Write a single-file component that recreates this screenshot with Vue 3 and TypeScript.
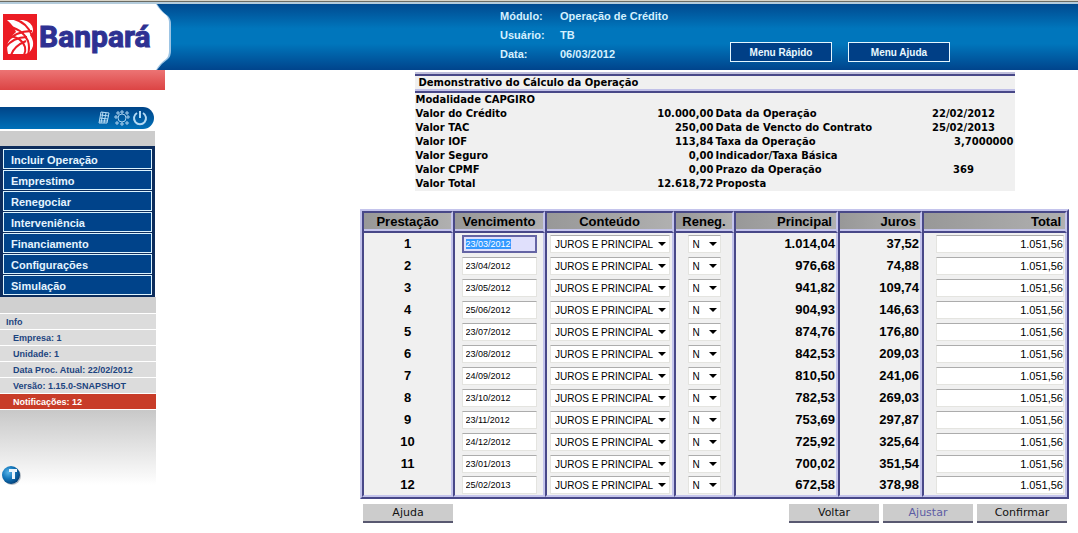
<script setup lang="ts">
import { onMounted, reactive, ref } from 'vue'

interface Installment {
  number: number
  due: string
  content: string
  renegotiated: string
  principal: string
  interest: string
  total: string
}

interface SummaryRow {
  label: string
  value: string
  otherLabel: string
  otherValue: string
  numeric?: boolean
}

const session = [
  { label: 'Módulo:', value: 'Operação de Crédito' },
  { label: 'Usuário:', value: 'TB' },
  { label: 'Data:', value: '06/03/2012' },
]

const menu = [
  'Incluir Operação',
  'Emprestimo',
  'Renegociar',
  'Interveniência',
  'Financiamento',
  'Configurações',
  'Simulação',
]

const info = ['Empresa: 1', 'Unidade: 1', 'Data Proc. Atual: 22/02/2012', 'Versão: 1.15.0-SNAPSHOT']

const summary: SummaryRow[] = [
  { label: 'Valor do Crédito', value: '10.000,00', otherLabel: 'Data da Operação', otherValue: '22/02/2012' },
  { label: 'Valor TAC', value: '250,00', otherLabel: 'Data de Vencto do Contrato', otherValue: '25/02/2013' },
  { label: 'Valor IOF', value: '113,84', otherLabel: 'Taxa da Operação', otherValue: '3,7000000', numeric: true },
  { label: 'Valor Seguro', value: '0,00', otherLabel: 'Indicador/Taxa Básica', otherValue: '' },
  { label: 'Valor CPMF', value: '0,00', otherLabel: 'Prazo da Operação', otherValue: '369' },
  { label: 'Valor Total', value: '12.618,72', otherLabel: 'Proposta', otherValue: '' },
]

const source: [string, string, string][] = [
  ['23/03/2012', '1.014,04', '37,52'],
  ['23/04/2012', '976,68', '74,88'],
  ['23/05/2012', '941,82', '109,74'],
  ['25/06/2012', '904,93', '146,63'],
  ['23/07/2012', '874,76', '176,80'],
  ['23/08/2012', '842,53', '209,03'],
  ['24/09/2012', '810,50', '241,06'],
  ['23/10/2012', '782,53', '269,03'],
  ['23/11/2012', '753,69', '297,87'],
  ['24/12/2012', '725,92', '325,64'],
  ['23/01/2013', '700,02', '351,54'],
  ['25/02/2013', '672,58', '378,98'],
]

const installments = reactive<Installment[]>(
  source.map(([due, principal, interest], i) => ({
    number: i + 1,
    due,
    content: 'JUROS E PRINCIPAL',
    renegotiated: 'N',
    principal,
    interest,
    total: '1.051,56',
  })),
)

const form = ref<HTMLFormElement | null>(null)

onMounted(() => {
  const first = form.value?.querySelector<HTMLInputElement>('.date')
  first?.focus()
  first?.select()
})
</script>

<template>
  <div class="page">
    <header class="top">
      <svg class="logo" viewBox="0 0 172 66" role="img" aria-label="Banpará">
        <path d="M0 0H157Q162 8 168 12Q171 15 171 20V47Q171 52 168 55Q162 59 157 66H0Z" fill="#9cc4e4" />
        <path d="M0 0H156Q160 7 166 11Q169 14 169 19V47Q169 52 166 55Q160 59 156 66H0Z" fill="#fff" />
        <rect x="3" y="10" width="34" height="46" fill="#ec1c24" />
        <path d="M7 16H23Q32 18 33 25Q33 29 30 31Q34 37 33 42Q31 49 25 50H8Q6 42 9 36Q12 31 16 28Q14 22 7 16Z" fill="#fff" />
        <g fill="none" stroke="#ec1c24" stroke-width="2">
          <path d="M14 15Q28 19 32 32" />
          <path d="M6 22Q22 24 28 37Q30 43 28 51" />
          <path d="M6 39Q15 27 32 27" />
          <path d="M5 44Q13 33 27 33" />
          <path d="M11 51Q14 42 26 37" />
          <path d="M7 32Q21 32 25 43Q26 47 24 51" />
        </g>
        <text x="39" y="43" class="wordmark">Banpará</text>
      </svg>
      <dl class="session">
        <template v-for="item in session" :key="item.label">
          <dt>{{ item.label }}</dt>
          <dd>{{ item.value }}</dd>
        </template>
      </dl>
      <nav class="shortcuts">
        <button type="button">Menu Rápido</button>
        <button type="button">Menu Ajuda</button>
      </nav>
    </header>

    <div class="body">
      <aside class="side">
        <div class="red-bar"></div>
        <div class="tools">
          <button type="button" aria-label="Calculadora">
            <svg viewBox="0 0 16 16" fill="none" stroke="#b8dcf4" stroke-width="1">
              <path d="M5 2L13 3L11 13L3 13Z M7 2L5 13 M10 3L8 13 M5 5L13 6 M4 8L12 9 M3 11L11 11" />
            </svg>
          </button>
          <button type="button" aria-label="Configurar">
            <svg viewBox="0 0 16 16" fill="none" stroke="#a8d0ee" stroke-width="1">
              <circle cx="8" cy="8" r="4" />
              <path d="M7 1H9V3H7Z M7 13H9V15H7Z M1 6H3V8H1Z M13 6H15V8H13Z M3 2H5V4H3Z M12 2H14V4H12Z M2 12H4V14H2Z M12 12H14V14H12Z" />
            </svg>
          </button>
          <button type="button" aria-label="Sair">
            <svg viewBox="0 0 16 16" fill="none" stroke="#b4daf4" stroke-width="2">
              <path d="M5 3A6 6 0 1 0 11 3M8 1V8" />
            </svg>
          </button>
        </div>
        <nav class="menu">
          <a v-for="entry in menu" :key="entry" href="#">{{ entry }}</a>
        </nav>
        <div class="info">
          <div class="info-title">Info</div>
          <div v-for="line in info" :key="line" class="info-line">{{ line }}</div>
          <div class="info-line alert">Notificações: 12</div>
        </div>
        <div class="fade">
          <svg viewBox="0 0 20 20" class="ball" aria-hidden="true">
            <defs>
              <radialGradient id="ball-fill" cx="35%" cy="35%" r="70%">
                <stop offset="0" stop-color="#58b4e8" />
                <stop offset="0.5" stop-color="#1478bc" />
                <stop offset="1" stop-color="#023f78" />
              </radialGradient>
            </defs>
            <circle cx="11" cy="11" r="9" fill="#b4bcc4" />
            <circle cx="10" cy="10" r="9" fill="url(#ball-fill)" />
            <path d="M8 4H16V7H14V14H11V7H8Z" fill="#eaf5fc" />
          </svg>
        </div>
      </aside>

      <main class="content">
        <section class="summary">
          <h1>Demonstrativo do Cálculo da Operação</h1>
          <table>
            <colgroup>
              <col class="s-label" />
              <col class="s-value" />
              <col class="s-other" />
              <col />
            </colgroup>
            <tbody>
              <tr>
                <th colspan="4" scope="row">Modalidade CAPGIRO</th>
              </tr>
              <tr v-for="row in summary" :key="row.label">
                <th scope="row">{{ row.label }}</th>
                <td class="num">{{ row.value }}</td>
                <th scope="row">{{ row.otherLabel }}</th>
                <td :class="row.numeric ? 'num' : 'mid'">{{ row.otherValue }}</td>
              </tr>
            </tbody>
          </table>
        </section>

        <form ref="form" @submit.prevent>
          <table class="grid">
            <colgroup>
              <col class="c-number" />
              <col class="c-due" />
              <col class="c-content" />
              <col class="c-reneg" />
              <col class="c-principal" />
              <col class="c-interest" />
              <col />
            </colgroup>
            <thead>
              <tr>
                <th scope="col">Prestação</th>
                <th scope="col">Vencimento</th>
                <th scope="col">Conteúdo</th>
                <th scope="col">Reneg.</th>
                <th scope="col" class="right">Principal</th>
                <th scope="col" class="right">Juros</th>
                <th scope="col" class="right">Total</th>
              </tr>
            </thead>
            <tbody>
              <tr v-for="row in installments" :key="row.number">
                <td>{{ row.number }}</td>
                <td>
                  <input v-model="row.due" class="date" type="text" :aria-label="`Vencimento ${row.number}`" />
                </td>
                <td>
                  <span class="pick wide">
                    <select v-model="row.content" :aria-label="`Conteúdo ${row.number}`">
                      <option>JUROS E PRINCIPAL</option>
                    </select>
                  </span>
                </td>
                <td>
                  <span class="pick">
                    <select v-model="row.renegotiated" :aria-label="`Reneg. ${row.number}`">
                      <option>N</option>
                      <option>S</option>
                    </select>
                  </span>
                </td>
                <td class="right">{{ row.principal }}</td>
                <td class="right">{{ row.interest }}</td>
                <td class="right">
                  <input v-model="row.total" class="total" type="text" :aria-label="`Total ${row.number}`" />
                </td>
              </tr>
            </tbody>
          </table>
          <div class="actions">
            <button type="button" class="help">Ajuda</button>
            <button type="button">Voltar</button>
            <button type="button" class="muted">Ajustar</button>
            <button type="submit">Confirmar</button>
          </div>
        </form>
      </main>
    </div>
  </div>
</template>

<style>
body {
  margin: 0;
  background: #fff;
}
</style>

<style scoped>
.page {
  font-family: "Liberation Sans", Arial, sans-serif;
  color: #000;
}
.page * {
  box-sizing: border-box;
}
button {
  font-family: inherit;
  cursor: pointer;
}

.top {
  display: flex;
  border-top: 1px solid #d8d4c8;
  box-shadow: inset 0 1px #6c6c64, inset 0 3px #b4ccdc;
  padding-top: 3px;
  background: linear-gradient(#00448a, #0076bc 40%, #0076bc 62%, #00448c);
}
.logo {
  width: 172px;
  height: 66px;
  flex: none;
}
.wordmark {
  font: bold 30px Roboto, "Liberation Sans", sans-serif;
  fill: #2e3192;
  stroke: #2e3192;
  stroke-width: 1px;
}
.session {
  display: grid;
  grid-template-columns: 60px auto;
  align-content: start;
  margin: 3px 0 0 auto;
  width: 230px;
  font-size: 11px;
  font-weight: bold;
  line-height: 19px;
  color: #d4f0ff;
}
.session dd {
  margin: 0;
}
.shortcuts {
  display: flex;
  align-items: flex-start;
  gap: 16px;
  padding-top: 38px;
  margin-right: 128px;
}
.shortcuts button {
  width: 102px;
  height: 20px;
  padding: 0;
  border: 1px solid #e4f6ff;
  background: #003f86;
  color: #e8f8ff;
  font-size: 10px;
  font-weight: bold;
}

.body {
  display: flex;
  align-items: flex-start;
}
.side {
  width: 165px;
  flex: none;
}
.red-bar {
  height: 20px;
  background: linear-gradient(#ec7474, #dc4444);
}
.tools {
  display: flex;
  justify-content: flex-end;
  align-items: center;
  gap: 2px;
  width: 154px;
  height: 22px;
  margin-top: 17px;
  padding-right: 6px;
  border-radius: 0 11px 11px 0;
  background: linear-gradient(#004488, #0070b8);
}
.tools button {
  display: block;
  width: 16px;
  height: 16px;
  padding: 0;
  border: 0;
  background: none;
}
.tools svg {
  display: block;
}
.menu {
  display: flex;
  flex-direction: column;
  gap: 1px;
  width: 155px;
  margin-top: 2px;
  padding: 3px 3px 2px;
  border-top: 15px solid #ccc;
  background: #0c2c5c;
}
.menu a {
  height: 20px;
  padding-left: 7px;
  border: 1px solid #dcf4ff;
  background: #00438a;
  color: #e4f4ff;
  font-size: 11px;
  font-weight: bold;
  line-height: 20px;
  text-decoration: none;
}
.info {
  width: 156px;
  padding-top: 16px;
  background: #d0d0d0;
  color: #1c4480;
  font-size: 9px;
  font-weight: bold;
}
.info-title,
.info-line {
  height: 16px;
  padding-left: 13px;
  border-top: 1px solid #fff;
  background: #dcdcdc;
  line-height: 16px;
}
.info-title {
  padding-left: 6px;
}
.info-line.alert {
  background: #c83c28;
  color: #fff;
}
.fade {
  width: 156px;
  padding: 55px 0 0 1px;
  border-top: 1px solid #fff;
  background: linear-gradient(#c8c8c8, #fff);
}
.ball {
  display: block;
  width: 20px;
  height: 20px;
}

.content {
  flex: 1;
  min-width: 0;
  padding: 2px 9px 0 195px;
}
.summary {
  max-width: 600px;
  margin: 0 auto;
  background: #f0f0f0;
  font-family: "DejaVu Sans", Verdana, sans-serif;
  font-size: 10px;
  font-weight: bold;
}
.summary h1 {
  margin: 0;
  padding-left: 4px;
  border-top: 2px solid #c0c0dc;
  border-bottom: 2px solid #484888;
  box-shadow: inset 0 2px #484888, inset 0 -2px #c0c0e8;
  font-size: 10px;
  line-height: 17px;
}
.summary table {
  width: 100%;
  table-layout: fixed;
  border-collapse: collapse;
  line-height: 14px;
}
.summary th,
.summary td {
  height: 14px;
  padding: 0 1px;
  text-align: left;
  white-space: nowrap;
}
.summary .num {
  text-align: right;
}
.summary .mid {
  text-align: center;
}
.s-label,
.s-value {
  width: 25%;
}
.s-other {
  width: 33%;
}

.grid {
  width: 100%;
  margin-top: 18px;
  table-layout: fixed;
  border-collapse: separate;
  border-spacing: 0;
  border: 2px solid #484888;
  border-top-color: #c4c4ec;
  border-left-color: #c4c4ec;
  background: #f0f0f0;
  font-size: 13px;
  font-weight: bold;
}
.c-number {
  width: 91px;
}
.c-due {
  width: 92px;
}
.c-content {
  width: 129px;
}
.c-reneg {
  width: 60px;
}
.c-principal {
  width: 104px;
}
.c-interest {
  width: 84px;
}
.grid th,
.grid td {
  height: 22px;
  padding: 0;
  border-left: 2px solid #484888;
  border-right: 2px solid #c4c4ec;
  text-align: center;
  line-height: 16px;
}
.grid th {
  border-top: 2px solid #484888;
  border-bottom: 2px solid #484888;
  box-shadow: inset 0 -2px #c4c4ec;
  background: linear-gradient(90deg, #989898, #b0b0b0);
}
.grid tbody tr:last-child td {
  border-bottom: 2px solid #c4c4ec;
}
.grid td.right {
  padding-right: 1px;
  text-align: right;
}
.grid th.right {
  padding-right: 4px;
  text-align: right;
}
.grid input,
.grid select {
  display: block;
  height: 18px;
  border: 1px solid #e4e4e0;
  border-top-color: #acacac;
  border-radius: 0;
  outline: 0;
  background: #fff;
  font-family: inherit;
  color: #000;
}
.grid .date {
  width: 75px;
  margin: 0 auto;
  padding: 0 3px;
  font-size: 9px;
}
.grid .date:focus {
  border: 2px solid #6464a4;
  padding: 0 2px;
  background: #e0e0fc;
}
.date::selection {
  background: #3399ff;
  color: #fff;
}
.grid .total {
  width: calc(100% - 12px);
  margin-left: auto;
  padding: 0;
  font-size: 11px;
  text-align: right;
}
.pick {
  position: relative;
  display: block;
  width: 33px;
  margin: 0 auto;
}
.pick.wide {
  width: 120px;
  margin-right: 2px;
}
.pick select {
  width: 100%;
  padding: 0 0 0 4px;
  appearance: none;
  font-size: 10px;
}
.pick::after {
  content: "";
  position: absolute;
  right: 4px;
  top: 7px;
  border: 4px solid transparent;
  border-top-color: #000;
  border-bottom: 0;
  pointer-events: none;
}
.actions {
  display: flex;
  gap: 4px;
  padding: 5px 2px 0 3px;
}
.actions button {
  width: 90px;
  height: 19px;
  padding: 0;
  border: 0;
  border-bottom: 2px solid #585870;
  background: #ccc;
  font-family: "DejaVu Sans", Verdana, sans-serif;
  font-size: 11px;
  color: #111;
}
.actions .help {
  margin-right: auto;
}
.actions .muted {
  color: #5c5ca4;
}
</style>
